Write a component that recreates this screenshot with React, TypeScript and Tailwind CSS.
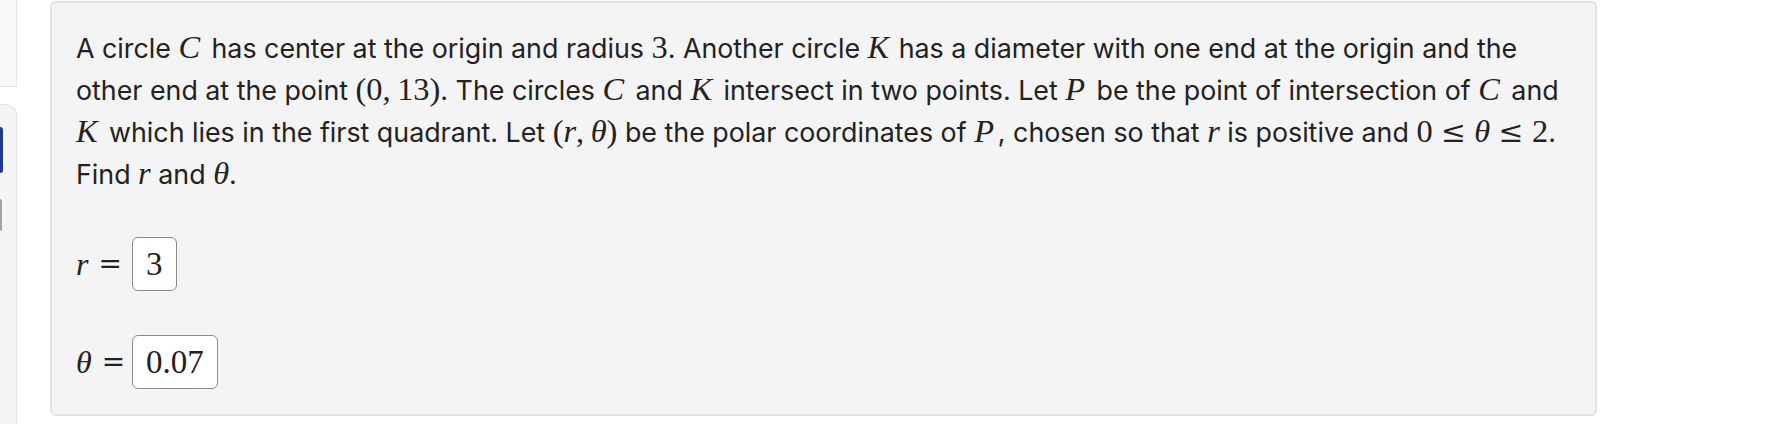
import React from "react";

function M({ children }: { children: React.ReactNode }) {
	return <span className="text-[1.21em] leading-none font-['Liberation_Serif',serif] not-italic">{children}</span>;
}

// capital math letters get a little extra room, like the wider Computer Modern italics
function V({ children }: { children: React.ReactNode }) {
	return <i className="pr-[0.12em]">{children}</i>;
}

function Leq() {
	return <span className="mx-[0.28em] font-['DejaVu_Serif',serif] text-[0.92em]">≤</span>;
}

function Sidebar() {
	return (
		<div className="flex flex-col w-[17px] shrink-0">
			<div className="h-[87px] bg-[#f7f8fa] border-r border-b border-[#e3e5e8]" />
			<div className="mt-[17px] h-[320px] bg-[#f5f5f5] border-t border-r border-[#e3e3e3] rounded-tr-[12px] flex flex-col">
				<div className="mt-[22px] h-[46px] w-[3px] bg-[#1e3a8a] rounded-r-[3px]" />
				<div className="mt-[26px] h-[32px] w-[2px] bg-[#a3a3a3] rounded-r-[2px]" />
			</div>
		</div>
	);
}

function AnswerBox({ value }: { value: string }) {
	return (
		<span className="inline-flex items-center h-[54px] px-[13px] bg-white border-[1.5px] border-[#8c8c8c] rounded-[6px] font-['Liberation_Serif',serif] text-[33px] leading-none">
			{value}
		</span>
	);
}

function Label({ children }: { children: React.ReactNode }) {
	return (
		<span className="w-[56px] flex items-center gap-[10px] font-['Liberation_Serif',serif] text-[32px]">
			<i>{children}</i>
			<span className="font-['DejaVu_Serif',serif] text-[28px] not-italic">=</span>
		</span>
	);
}

function Question() {
	return (
		<div className="ml-[33px] mt-px w-[1547px] h-[415px] bg-[#f4f4f4] border-2 border-[#e4e4e4] rounded-[6px] shadow-[0_-1px_1px_rgba(0,0,0,0.04)] px-6 pt-6 text-[#222] font-['Inter',sans-serif] text-[26.8px]">
			<div className="leading-[42px] whitespace-nowrap">
				<div>
					A circle{" "}
					<M>
						<V>C</V>
					</M>{" "}
					has center at the origin and radius <M>3</M>. Another circle{" "}
					<M>
						<i className="pr-[0.06em]">K</i>
					</M>{" "}
					has a diameter with one end at the origin and the
				</div>
				<div>
					other end at the point <M>(0,&thinsp;13)</M>. The circles{" "}
					<M>
						<V>C</V>
					</M>{" "}
					and{" "}
					<M>
						<V>K</V>
					</M>{" "}
					intersect in two points. Let{" "}
					<M>
						<V>P</V>
					</M>{" "}
					be the point of intersection of{" "}
					<M>
						<V>C</V>
					</M>{" "}
					and
				</div>
				<div>
					<M>
						<V>K</V>
					</M>{" "}
					which lies in the first quadrant. Let{" "}
					<M>
						(<i>r</i>,&thinsp;<i>θ</i>)
					</M>{" "}
					be the polar coordinates of{" "}
					<M>
						<V>P</V>
					</M>
					, chosen so that{" "}
					<M>
						<i>r</i>
					</M>{" "}
					is positive and{" "}
					<M>
						0<Leq />
						<i>θ</i>
						<Leq />2
					</M>
					.
				</div>
				<div>
					Find{" "}
					<M>
						<i>r</i>
					</M>{" "}
					and{" "}
					<M>
						<i>θ</i>
					</M>
					.
				</div>
			</div>
			<div className="mt-[42px] flex items-center">
				<Label>r</Label>
				<AnswerBox value="3" />
			</div>
			<div className="mt-[44px] flex items-center">
				<Label>θ</Label>
				<AnswerBox value="0.07" />
			</div>
		</div>
	);
}

export default function App() {
	return (
		<div className="w-[1770px] h-[424px] bg-white flex overflow-hidden">
			<Sidebar />
			<Question />
		</div>
	);
}
